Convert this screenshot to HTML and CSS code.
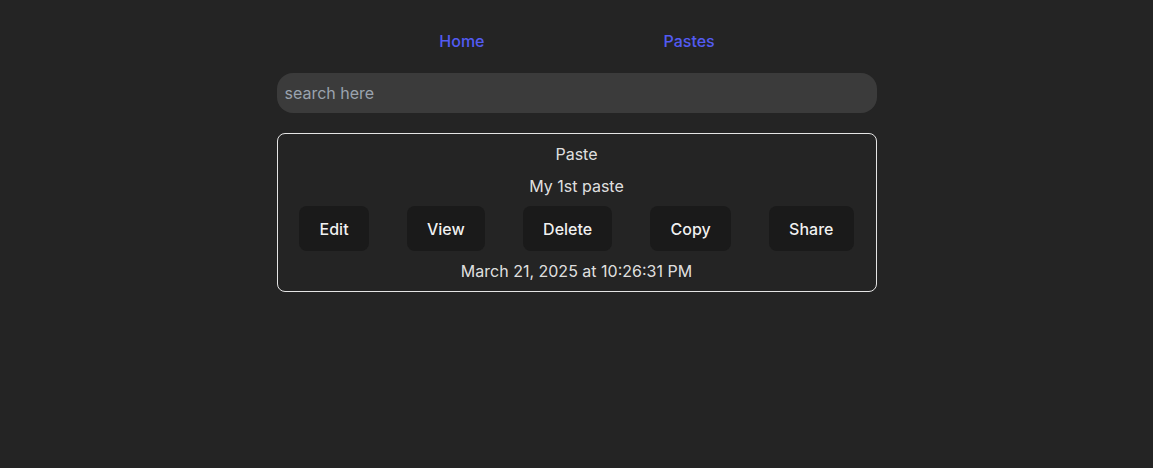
FILE: index.html
```html
<!DOCTYPE html>
<html lang="en">
<head>
<meta charset="UTF-8">
<title>Pastes</title>
<link rel="stylesheet" href="styles.css">
</head>
<body>
<div class="app">
  <nav class="navbar">
    <a class="nav-link" href="#">Home</a>
    <a class="nav-link" href="#">Pastes</a>
  </nav>
  <div class="content">
    <input class="search" type="search" placeholder="search here">
    <div class="card">
      <div class="card-title">Paste</div>
      <div class="card-body">My 1st paste</div>
      <div class="actions">
        <button class="btn">Edit</button>
        <button class="btn">View</button>
        <button class="btn">Delete</button>
        <button class="btn">Copy</button>
        <button class="btn">Share</button>
      </div>
      <div class="card-date">March 21, 2025 at 10:26:31 PM</div>
    </div>
  </div>
</div>
</body>
</html>
```
FILE: styles.css
```css
html, body {
  margin: 0;
  padding: 0;
}
body {
  background: #242424;
  color: rgba(255, 255, 255, 0.87);
  font-family: Inter, "Noto Sans", sans-serif;
  font-size: 16px;
  line-height: 24px;
  min-height: 468px;
}
.app {
  display: flex;
  flex-direction: column;
  align-items: center;
  padding-top: 29px;
}
.navbar {
  display: flex;
  justify-content: center;
  gap: 179px;
  width: 600px;
  margin-left: 1px;
}
.nav-link {
  color: #535bf2;
  font-weight: 500;
  text-decoration: none;
}
.content {
  width: 600px;
  display: flex;
  flex-direction: column;
  gap: 20px;
  margin-top: 20px;
}
.search {
  box-sizing: border-box;
  width: 100%;
  height: 40px;
  border: none;
  outline: none;
  border-radius: 16px;
  background: #3b3b3b;
  padding: 0 8px;
  font-family: Inter, "Noto Sans", sans-serif;
  font-size: 16px;
  color: rgba(255, 255, 255, 0.87);
}
.search::placeholder {
  color: #9aa3ae;
}
.card {
  border: 1px solid #e5e5e5;
  border-radius: 8px;
  padding: 8px;
  display: flex;
  flex-direction: column;
  align-items: center;
  gap: 8px;
}
.actions {
  display: flex;
  justify-content: center;
  gap: 38px;
}
.btn {
  border-radius: 8px;
  border: 1px solid transparent;
  padding: 0.6em 1.2em;
  font-size: 1em;
  font-weight: 500;
  font-family: inherit;
  line-height: 24px;
  background-color: #1a1a1a;
  color: rgba(255, 255, 255, 0.95);
  cursor: pointer;
}
```
